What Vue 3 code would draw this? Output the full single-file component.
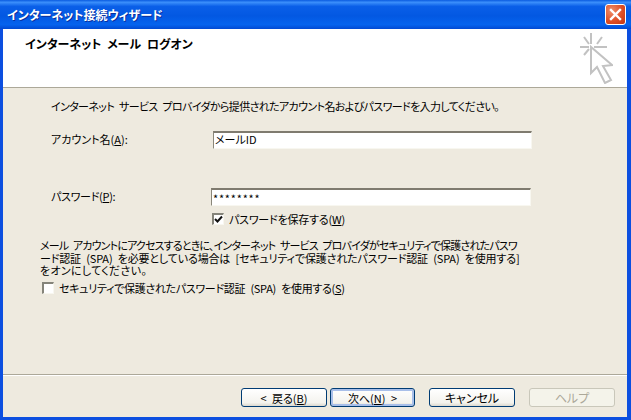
<template>
  <div class="window">
    <div class="titlebar">
      <span class="title">インターネット接続ウィザード</span>
      <button class="close" aria-label="閉じる">
        <svg width="19" height="19" viewBox="0 0 19 19">
          <path d="M5 5 14 14M14 5 5 14" stroke="#fff" stroke-width="2.4" stroke-linecap="square" fill="none" />
        </svg>
      </button>
    </div>
    <div class="client">
      <header class="head">
        <h1 class="heading">インターネット メール ログオン</h1>
        <svg class="wizard-icon" width="33" height="51" viewBox="0 0 33 51">
          <g stroke="#c2c2c2" stroke-width="2" fill="none">
            <path d="M11 0v11M0 14h9M14 14h13M4 4l5 7M22 4l-5 7M4 22l5-6" />
            <path d="M11 14 11 40 17 34 25 50 31 47 23 33 32 32Z" fill="#fff" />
          </g>
        </svg>
      </header>
      <main class="body">
        <p class="intro">インターネット サービス プロバイダから提供されたアカウント名およびパスワードを入力してください。</p>
        <div class="field account">
          <label class="label">アカウント名(<u>A</u>):</label>
          <div class="input">メールID</div>
        </div>
        <div class="field password">
          <label class="label">パスワード(<u>P</u>):</label>
          <div class="input pass">********</div>
        </div>
        <label class="check save">
          <span class="box">
            <svg width="9" height="9" viewBox="0 0 9 9"><path d="M1 4 3.5 6.5 8 1.5" stroke="#111" stroke-width="2" fill="none" /></svg>
          </span>
          <span>パスワードを保存する(<u>W</u>)</span>
        </label>
        <p class="note">
          <span class="line l1">メール アカウントにアクセスするときに、インターネット サービス プロバイダがセキュリティで保護されたパスワ</span>
          <span class="line l2">ード認証 (SPA) を必要としている場合は [セキュリティで保護されたパスワード認証 (SPA) を使用する]</span>
          <span class="line l3">をオンにしてください。</span>
        </p>
        <label class="check spa">
          <span class="box"></span>
          <span>セキュリティで保護されたパスワード認証 (SPA) を使用する(<u>S</u>)</span>
        </label>
      </main>
      <footer class="foot">
        <button class="btn">&lt; 戻る(<u>B</u>)</button>
        <button class="btn default">次へ(<u>N</u>) &gt;</button>
        <button class="btn cancel">キャンセル</button>
        <button class="btn help" disabled>ヘルプ</button>
      </footer>
    </div>
  </div>
</template>

<script setup>
</script>

<style>
html, body { margin: 0; padding: 0; background: #0054e3; }
</style>

<style scoped>
.window {
  width: 631px;
  height: 420px;
  box-sizing: border-box;
  display: flex;
  flex-direction: column;
  overflow: hidden;
  background: #0c4fe0;
  font-family: "Noto Sans CJK JP", "Noto Sans", sans-serif;
  font-feature-settings: "palt";
  font-size: 11px;
  line-height: 12px;
  word-spacing: 3px;
  color: #000;
}
.titlebar {
  height: 29px;
  flex: none;
  display: flex;
  align-items: center;
  justify-content: space-between;
  padding: 0 5px 0 7px;
  background: linear-gradient(180deg, #0a5be0 0%, #3b8ffb 8%, #0a5fe8 22%, #0358e2 55%, #0563ee 85%, #0149d2 100%);
}
.title {
  color: #fff;
  font-weight: 700;
  font-size: 12px;
  text-shadow: 1px 1px 0 #0a2f9e;
}
.close {
  width: 21px;
  height: 21px;
  padding: 0;
  border: 1px solid #fff;
  border-radius: 3px;
  background: radial-gradient(circle at 30% 30%, #ef8f6c, #df4f27 55%, #c3350f);
  display: flex;
  align-items: center;
  justify-content: center;
}
.client {
  flex: 1;
  display: flex;
  flex-direction: column;
  margin: 0 4px 3px 3px;
  background: #eeeadf;
  min-height: 0;
}
.head {
  height: 59px;
  flex: none;
  box-sizing: border-box;
  background: #fff;
  border-bottom: 1px solid #aca899;
  display: flex;
  justify-content: space-between;
  padding: 8px 14px 0 22px;
}
.heading {
  margin: 0;
  font-size: 12px;
  font-weight: 700;
  line-height: 14px;
}
.wizard-icon { margin-top: -4px; }
.body {
  flex: 1;
  padding: 12px 0 0 37px;
  min-height: 0;
}
.intro {
  margin: 0 0 0 11px;
  white-space: nowrap;
  letter-spacing: -.63px;
}
.field {
  display: flex;
  align-items: center;
  height: 18px;
}
.label { flex: none; margin-left: 11px; padding-bottom: 2px; }
.account { margin-top: 19px; }
.account .label { width: 162px; }
.account .input { width: 319px; }
.password { margin-top: 39px; }
.password .label { width: 160px; letter-spacing: -.3px; }
.password .input { width: 320px; }
.input {
  box-sizing: border-box;
  height: 18px;
  background: #fff;
  border: 1px solid;
  border-color: #7f7b6f #f8f7f0 #f8f7f0 #8a877a;
  border-top-width: 2px;
  padding: 0 0 0 1px;
  line-height: 12px;
}
.pass { letter-spacing: .8px; padding-top: 2px; }
.check { display: flex; align-items: center; white-space: nowrap; }
.box {
  box-sizing: border-box;
  width: 12px;
  height: 12px;
  flex: none;
  margin-right: 5px;
  background: #fff;
  border: 1px solid;
  border-color: #85847a #f8f7f0 #f8f7f0 #85847a;
  border-width: 2px 1px 1px 2px;
  display: flex;
  align-items: center;
  justify-content: center;
}
.save { margin: 7px 0 0 172px; letter-spacing: -.2px; }
.note {
  margin: 14px 0 0 0;
  line-height: 12.5px;
  white-space: nowrap;
}
.line { display: block; }
.l1 { letter-spacing: -.83px; }
.l2 { letter-spacing: -.16px; }
.l3 { letter-spacing: .3px; }
.spa { margin-top: 5px; margin-left: 2px; letter-spacing: -.3px; }
.foot {
  height: 43px;
  flex: none;
  box-sizing: border-box;
  border-top: 1px solid #aca899;
  box-shadow: inset 0 1px 0 #fff;
  display: flex;
  align-items: flex-start;
  padding: 13px 0 0 238px;
}
.btn {
  width: 86px;
  height: 19px;
  margin-right: 3px;
  padding: 0;
  font: inherit;
  font-feature-settings: "palt";
  word-spacing: 3px;
  color: #000;
  border: 1px solid #003c74;
  border-radius: 3px;
  background: linear-gradient(180deg, #fff 0%, #f4f3ee 80%, #dcd8ce 100%);
}
.default { width: 85px; box-shadow: inset 0 0 0 2px #a9bfe9; }
.cancel { margin-left: 11px; margin-right: 14px; font-size: 12px; }
.help {
  font-size: 12px;
  color: #aca899;
  border-color: #c9c7ba;
  background: #f4f3ea;
}
</style>
